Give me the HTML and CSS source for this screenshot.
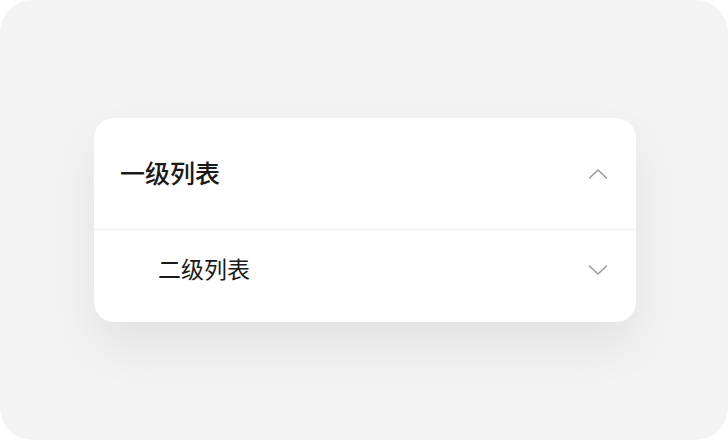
FILE: index.html
```html
<!DOCTYPE html>
<html lang="zh">
<head>
<meta charset="utf-8">
<link rel="stylesheet" href="styles.css">
</head>
<body>
<div class="frame">
  <div class="card">
    <div class="row row-main">
      <span class="title">一级列表</span>
      <svg class="chev" width="20" height="12" viewBox="0 0 20 12"><path d="M1.5 10 L10 2 L18.5 10" fill="none" stroke="#9a9a9a" stroke-width="1.5" stroke-linecap="round" stroke-linejoin="round"/></svg>
    </div>
    <div class="row row-sub">
      <span class="subtitle">二级列表</span>
      <svg class="chev" width="20" height="12" viewBox="0 0 20 12"><path d="M1.5 2 L10 10 L18.5 2" fill="none" stroke="#9a9a9a" stroke-width="1.5" stroke-linecap="round" stroke-linejoin="round"/></svg>
    </div>
  </div>
</div>
</body>
</html>
```
FILE: styles.css
```css
html, body { margin: 0; padding: 0; background: #ffffff; }
body { font-family: "Noto Sans CJK SC", "Noto Sans", sans-serif; }
.frame {
  width: 728px; height: 440px; box-sizing: border-box;
  background: #f3f3f3; border-radius: 32px;
  padding-top: 118px; padding-left: 94px;
}
.card {
  width: 542px; height: 204px; background: #fff; border-radius: 20px;
  box-shadow: 0 24px 48px rgba(0,0,0,0.07);
  display: flex; flex-direction: column; overflow: hidden;
}
.row { display: flex; align-items: center; justify-content: space-between; padding-right: 28px; }
.row-main { height: 111px; padding-left: 26px; border-bottom: 1px solid #efefef; }
.row-sub { flex: 1; padding-left: 64px; padding-bottom: 12px; }
.title { font-size: 25px; line-height: 30px; font-weight: 500; color: #1a1a1a; margin-bottom: 4px; }
.subtitle { font-size: 23px; line-height: 28px; font-weight: 400; color: #1a1a1a; margin-bottom: 4px; }
.chev { display: block; }
```
